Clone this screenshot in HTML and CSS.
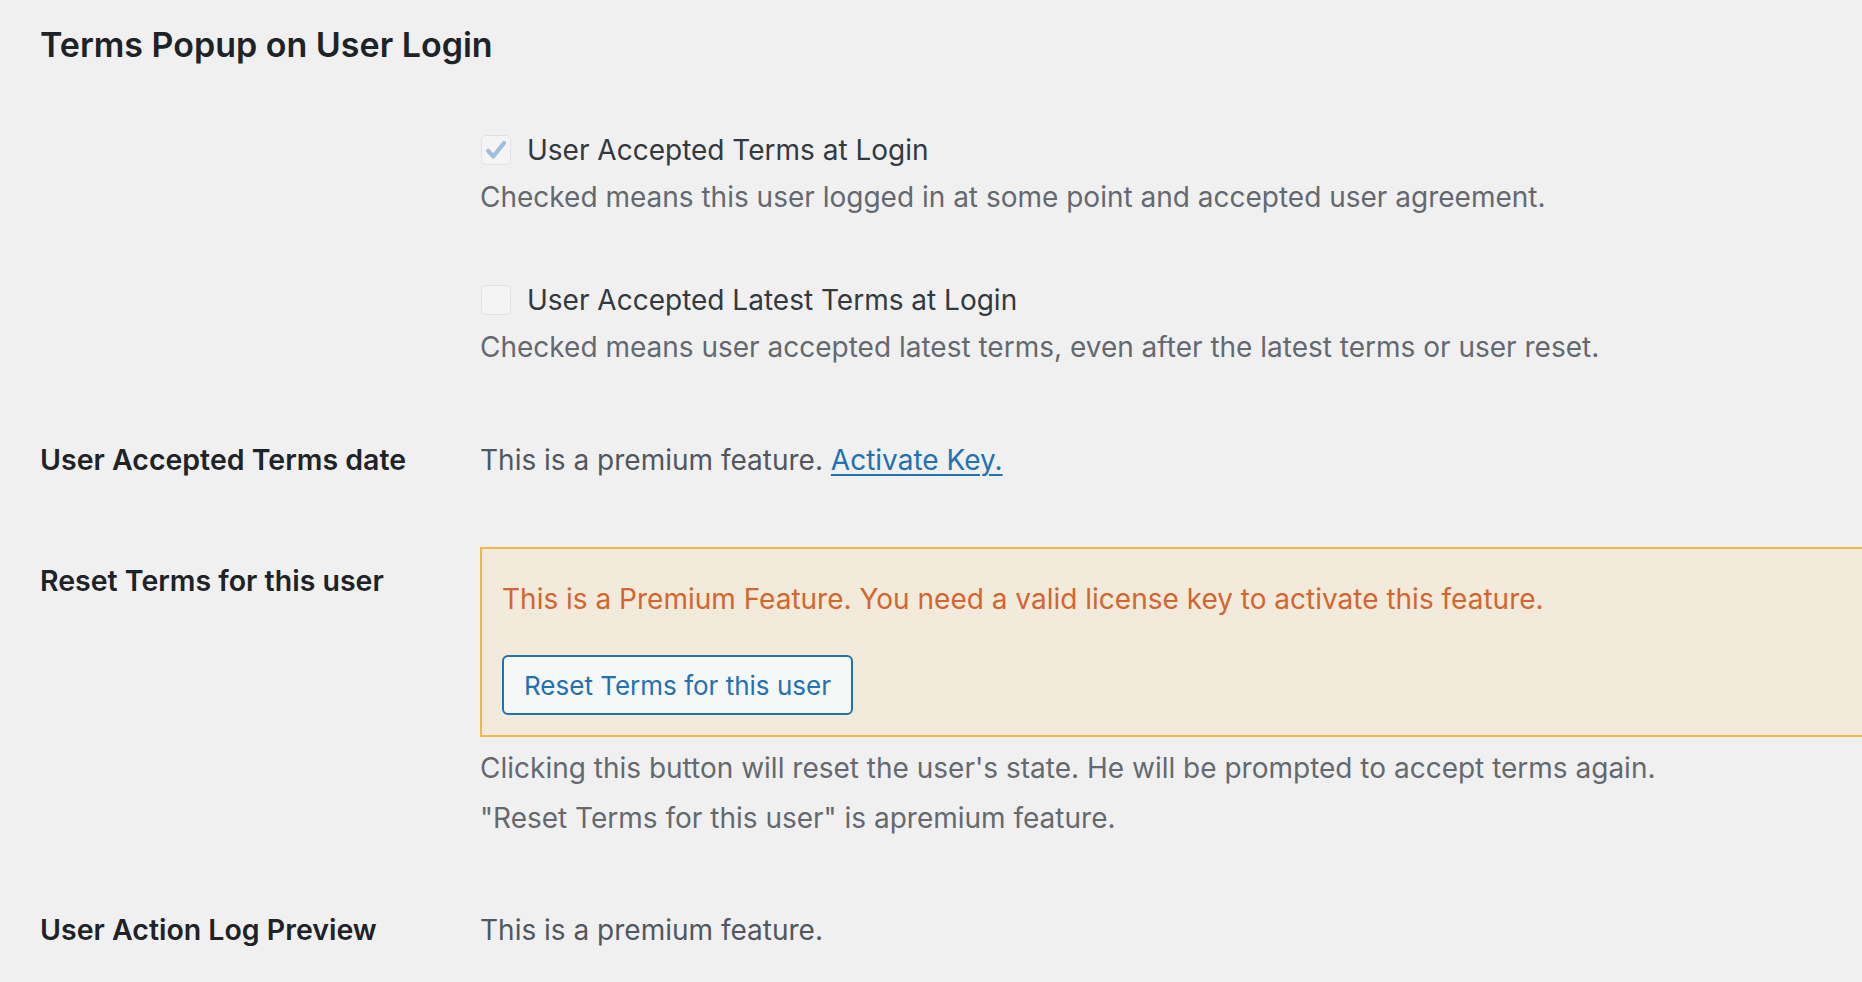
FILE: index.html
```html
<!DOCTYPE html>
<html lang="en">
<head>
<meta charset="utf-8">
<title>Terms Popup on User Login</title>
<link rel="stylesheet" href="styles.css">
</head>
<body>
<div class="wrap">
  <h2 class="title">Terms Popup on User Login</h2>

  <div class="row row-checks">
    <div class="th"></div>
    <div class="td">
      <label class="check-line">
        <span class="checkbox checked">
          <svg viewBox="0 0 20 20" width="26" height="26"><path d="M4 10.6 L7.9 15 L16.2 4.6" fill="none" stroke="#9dbde2" stroke-width="3.2" stroke-linecap="round" stroke-linejoin="round"/></svg>
        </span>
        <span class="check-text">User Accepted Terms at Login</span>
      </label>
      <p class="desc">Checked means this user logged in at some point and accepted user agreement.</p>

      <label class="check-line second">
        <span class="checkbox"></span>
        <span class="check-text">User Accepted Latest Terms at Login</span>
      </label>
      <p class="desc">Checked means user accepted latest terms, even after the latest terms or user reset.</p>
    </div>
  </div>

  <div class="row row-date">
    <div class="th">User Accepted Terms date</div>
    <div class="td"><span class="plain">This is a premium feature. <a class="link" href="#">Activate Key.</a></span></div>
  </div>

  <div class="row row-reset">
    <div class="th th-reset">Reset Terms for this user</div>
    <div class="td">
      <div class="premium-box">
        <p class="premium-msg">This is a Premium Feature. You need a valid license key to activate this feature.</p>
        <button class="btn" type="button">Reset Terms for this user</button>
      </div>
      <p class="desc desc-a">Clicking this button will reset the user's state. He will be prompted to accept terms again.</p>
      <p class="desc desc-b">"Reset Terms for this user" is apremium feature.</p>
    </div>
  </div>

  <div class="row row-log">
    <div class="th">User Action Log Preview</div>
    <div class="td"><span class="plain">This is a premium feature.</span></div>
  </div>
</div>
</body>
</html>
```

FILE: styles.css
```css
html, body {
  margin: 0;
  padding: 0;
}
body {
  background: #f0f0f1;
  font-family: Inter, "Noto Sans", "Liberation Sans", sans-serif;
  color: #3c434a;
  overflow: hidden;
  width: 1862px;
  height: 982px;
}
.wrap {
  padding: 23px 0 0 40px;
}
.title {
  margin: 0;
  font-size: 34px;
  line-height: 43px;
  font-weight: 600;
  color: #1d2327;
}
.row {
  display: flex;
}
.th {
  width: 440px;
  flex: 0 0 440px;
  font-size: 28.5px;
  line-height: 40px;
  font-weight: 600;
  color: #1d2327;
}
.td {
  flex: 1;
  min-width: 0;
}
.row-checks {
  margin-top: 64px;
}
.check-line {
  display: flex;
  align-items: center;
  height: 40px;
}
.check-line.second {
  margin-top: 63px;
}
.checkbox {
  width: 28px;
  height: 28px;
  margin-left: 1px;
  border: 1.5px solid #e2e2e4;
  border-radius: 5px;
  background: #f4f4f5;
  display: flex;
  align-items: center;
  justify-content: center;
}
.check-text {
  margin-left: 16px;
  font-size: 28px;
  color: #32393f;
}
.desc {
  margin: 7px 0 0;
  font-size: 28px;
  line-height: 40px;
  color: #646970;
}
.row-date {
  margin-top: 73px;
}
.plain {
  display: block;
  font-size: 28px;
  line-height: 40px;
  color: #50575e;
}
.link {
  color: #2271b1;
  text-decoration: underline;
  text-underline-offset: 4px;
  text-decoration-thickness: 2px;
}
.row-reset {
  margin-top: 67px;
}
.th-reset {
  margin-top: 14px;
}
.premium-box {
  background: #f2ebdb;
  border: 2px solid #f0b849;
  border-right: none;
  margin-right: -2px;
  padding: 30px 0 20px 20px;
}
.premium-msg {
  margin: 0;
  font-size: 28px;
  line-height: 40px;
  color: #d4652f;
}
.btn {
  margin-top: 36px;
  display: block;
  height: 60px;
  padding: 0 20px;
  font-family: inherit;
  font-size: 26px;
  color: #2271b1;
  background: #f6f7f7;
  border: 2px solid #2271b1;
  border-radius: 6px;
}
.desc-a {
  margin-top: 11px;
}
.desc-b {
  margin-top: 10px;
}
.row-log {
  margin-top: 72px;
}
```
